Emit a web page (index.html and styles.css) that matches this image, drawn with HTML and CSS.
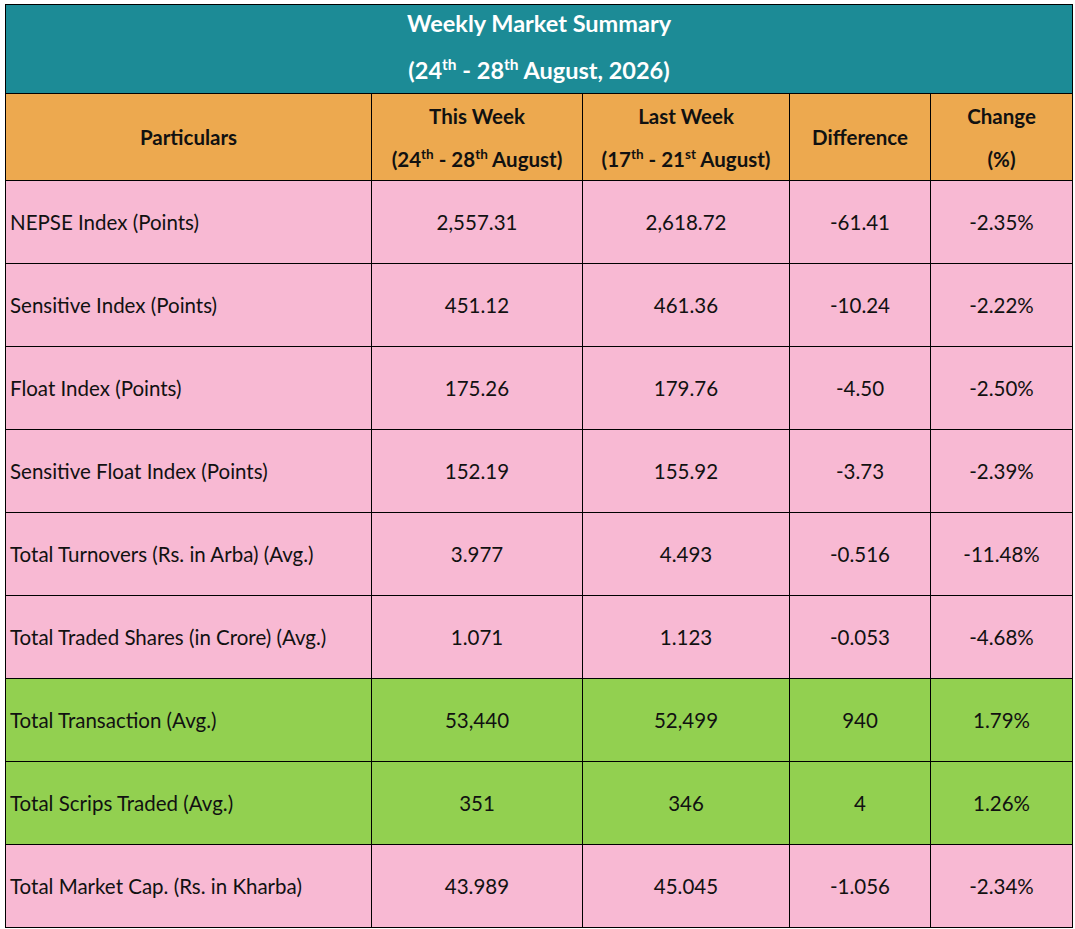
FILE: index.html
```html
<!DOCTYPE html>
<html>
<head>
<meta charset="utf-8">
<link rel="stylesheet" href="styles.css">
</head>
<body>
<table class="summary">
  <colgroup>
    <col class="c1"><col class="c2"><col class="c3"><col class="c4"><col class="c5">
  </colgroup>
  <tr class="title">
    <td colspan="5"><div class="l1">Weekly Market Summary</div><div class="l2">(24<sup>th</sup> - 28<sup>th</sup> August, 2026)</div></td>
  </tr>
  <tr class="head">
    <th>Particulars</th>
    <th><div>This Week</div><div class="l2">(24<sup>th</sup> - 28<sup>th</sup> August)</div></th>
    <th><div>Last Week</div><div class="l2">(17<sup>th</sup> - 21<sup>st</sup> August)</div></th>
    <th>Difference</th>
    <th><div>Change</div><div class="l2">(%)</div></th>
  </tr>
  <tr class="pink"><td class="name">NEPSE Index (Points)</td><td>2,557.31</td><td>2,618.72</td><td>-61.41</td><td>-2.35%</td></tr>
  <tr class="pink"><td class="name">Sensitive Index (Points)</td><td>451.12</td><td>461.36</td><td>-10.24</td><td>-2.22%</td></tr>
  <tr class="pink"><td class="name">Float Index (Points)</td><td>175.26</td><td>179.76</td><td>-4.50</td><td>-2.50%</td></tr>
  <tr class="pink"><td class="name">Sensitive Float Index (Points)</td><td>152.19</td><td>155.92</td><td>-3.73</td><td>-2.39%</td></tr>
  <tr class="pink"><td class="name">Total Turnovers (Rs. in Arba) (Avg.)</td><td>3.977</td><td>4.493</td><td>-0.516</td><td>-11.48%</td></tr>
  <tr class="pink"><td class="name">Total Traded Shares (in Crore) (Avg.)</td><td>1.071</td><td>1.123</td><td>-0.053</td><td>-4.68%</td></tr>
  <tr class="green"><td class="name">Total Transaction (Avg.)</td><td>53,440</td><td>52,499</td><td>940</td><td>1.79%</td></tr>
  <tr class="green"><td class="name">Total Scrips Traded (Avg.)</td><td>351</td><td>346</td><td>4</td><td>1.26%</td></tr>
  <tr class="pink"><td class="name">Total Market Cap. (Rs. in Kharba)</td><td>43.989</td><td>45.045</td><td>-1.056</td><td>-2.34%</td></tr>
</table>
</body>
</html>
```
FILE: styles.css
```css
html, body {
  margin: 0;
  padding: 0;
  background: #ffffff;
}
body {
  padding: 4px 0 0 5px;
  font-family: Lato, "Open Sans", sans-serif;
  color: #111;
}
.summary {
  border-collapse: collapse;
  table-layout: fixed;
  width: 1067px;
  border: 1.5px solid #000;
}
.c1 { width: 366px; }
.c2 { width: 211px; }
.c3 { width: 207px; }
.c4 { width: 141px; }
.c5 { width: 142px; }
.summary td, .summary th {
  border: 1px solid #000;
  text-align: center;
  vertical-align: middle;
  padding: 0;
  font-size: 20.5px;
}
.summary .name {
  text-align: left;
  padding-left: 4px;
}
.title td {
  background: #1c8b96;
  color: #fff;
  font-weight: bold;
  font-size: 23.5px;
  height: 88px;
  line-height: 46px;
  border-bottom: 1.5px solid #000;
}
.title td div { height: 44px; }
.title td .l1 { line-height: 36px; }
.title td .l2 { line-height: 42px; }
.head th {
  background: #eda94f;
  font-weight: bold;
  height: 86px;
  line-height: 44px;
  color: #111;
}
.head th div { height: 43px; }
.pink td { background: #f8b9d3; height: 82px; }
.green td { background: #92d050; height: 82px; }
sup {
  font-size: 0.66em;
  line-height: 0;
  vertical-align: 0.6em;
}
```
